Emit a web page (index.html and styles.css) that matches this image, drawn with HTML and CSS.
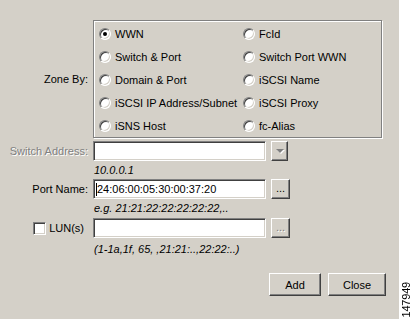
FILE: index.html
```html
<!DOCTYPE html>
<html lang="en">
<head>
    <meta charset="UTF-8">
    <title>Add Member to Zone</title>
    <link rel="stylesheet" href="styles.css">
</head>
<body>
    <div class="screen">
        <div class="dialog">
            <div class="form">
                <div class="label">Zone By:</div>
                <div class="group">
                    <div class="radio"><span class="dot checked"></span>WWN</div>
                    <div class="radio"><span class="dot"></span>FcId</div>
                    <div class="radio"><span class="dot"></span>Switch &amp; Port</div>
                    <div class="radio"><span class="dot"></span>Switch Port WWN</div>
                    <div class="radio"><span class="dot"></span>Domain &amp; Port</div>
                    <div class="radio"><span class="dot"></span>iSCSI Name</div>
                    <div class="radio"><span class="dot"></span>iSCSI IP Address/Subnet</div>
                    <div class="radio"><span class="dot"></span>iSCSI Proxy</div>
                    <div class="radio"><span class="dot"></span>iSNS Host</div>
                    <div class="radio"><span class="dot"></span>fc-Alias</div>
                </div>

                <div class="label disabled first">Switch Address:</div>
                <div class="control first">
                    <div class="field"></div>
                    <div class="btn combo"><span class="arrow"></span></div>
                </div>
                <div></div>
                <div class="hint h18">10.0.0.1</div>

                <div class="label">Port Name:</div>
                <div class="control">
                    <div class="field"><span class="caret"></span>24:06:00:05:30:00:37:20</div>
                    <div class="btn more">...</div>
                </div>
                <div></div>
                <div class="hint h19">e.g. 21:21:22:22:22:22:22,..</div>

                <div class="label lun"><span class="check"></span>LUN(s)</div>
                <div class="control">
                    <div class="field"></div>
                    <div class="btn more off">...</div>
                </div>
                <div></div>
                <div class="hint h22">(1-1a,1f, 65, ,21:21:..,22:22:..)</div>
            </div>

            <div class="actions">
                <div class="button add">Add</div>
                <div class="button close">Close</div>
            </div>
        </div>
        <div class="strip"><span class="figure">147949</span></div>
    </div>
</body>
</html>
```

FILE: styles.css
```css
body {
    margin: 0;
    padding: 0;
    font-family: "Liberation Sans", Arial, sans-serif;
    font-size: 11px;
    color: #000;
}

.screen {
    display: flex;
    width: 413px;
    height: 319px;
    overflow: hidden;
}

.dialog {
    width: 399px;
    background-color: #d4d0c8;
}

.form {
    display: grid;
    grid-template-columns: 88px auto;
    column-gap: 5px;
    padding-top: 20px;
}

.label {
    display: flex;
    align-items: center;
    justify-content: flex-end;
    height: 20px;
    white-space: nowrap;
}

.label:first-child {
    height: auto;
}

.label.disabled {
    color: #808080;
    text-shadow: 1px 1px 0 #fff;
}

.label.lun {
    padding-right: 4px;
}

.first {
    margin-top: 3px;
}

/* etched group box */
.group {
    box-sizing: border-box;
    width: 289px;
    height: 118px;
    padding: 1px 0 0 5px;
    border: 1px solid #808080;
    box-shadow: inset 1px 1px 0 #fff, 1px 1px 0 #fff;
    display: grid;
    grid-template-columns: 144px auto;
    grid-auto-rows: 23px;
}

.radio {
    display: flex;
    align-items: center;
    white-space: nowrap;
}

.dot {
    box-sizing: border-box;
    width: 12px;
    height: 12px;
    margin-right: 4px;
    border-radius: 50%;
    background-color: #fff;
    border: 1px solid;
    border-color: #808080 #fff #fff #808080;
    box-shadow: inset 1px 1px 0 #404040, inset -1px -1px 0 #d4d0c8;
    display: flex;
    align-items: center;
    justify-content: center;
}

.dot.checked::after {
    content: "";
    width: 4px;
    height: 4px;
    border-radius: 50%;
    background-color: #000;
}

.control {
    display: flex;
    gap: 5px;
    height: 20px;
}

.field {
    box-sizing: border-box;
    width: 173px;
    height: 20px;
    padding-left: 2px;
    background-color: #fff;
    border: 1px solid;
    border-color: #808080 #fff #fff #808080;
    box-shadow: inset 1px 1px 0 #404040, inset -1px -1px 0 #d4d0c8;
    display: flex;
    align-items: center;
    white-space: nowrap;
}

.caret {
    width: 1px;
    height: 13px;
    background-color: #000;
}

.btn,
.button {
    box-sizing: border-box;
    background-color: #d4d0c8;
    border: 1px solid;
    border-color: #fff #404040 #404040 #fff;
    box-shadow: inset -1px -1px 0 #808080;
    display: flex;
    align-items: center;
    justify-content: center;
}

.combo {
    width: 17px;
    height: 20px;
}

.arrow {
    width: 0;
    height: 0;
    border-left: 4px solid transparent;
    border-right: 4px solid transparent;
    border-top: 4px solid #808080;
    filter: drop-shadow(1px 1px 0 #fff);
}

.more {
    width: 19px;
    height: 20px;
    padding-bottom: 2px;
}

.more.off {
    color: #808080;
    text-shadow: 1px 1px 0 #fff;
}

.check {
    box-sizing: border-box;
    width: 13px;
    height: 13px;
    margin-right: 3px;
    background-color: #fff;
    border: 1px solid;
    border-color: #808080 #fff #fff #808080;
    box-shadow: inset 1px 1px 0 #404040, inset -1px -1px 0 #d4d0c8;
}

.hint {
    font-style: italic;
    padding-left: 1px;
    white-space: nowrap;
}

.h18 { height: 18px; line-height: 18px; }
.h19 { height: 19px; line-height: 19px; }
.h22 { height: 22px; line-height: 22px; }

.actions {
    display: flex;
    justify-content: flex-end;
    gap: 7px;
    margin-top: 13px;
    padding-right: 13px;
}

.button {
    height: 23px;
}

.add {
    width: 52px;
}

.close {
    width: 58px;
}

.strip {
    width: 14px;
    background-color: #fff;
    display: flex;
    flex-direction: column;
    justify-content: flex-end;
    align-items: center;
    padding-bottom: 1px;
}

.figure {
    writing-mode: vertical-rl;
    transform: rotate(180deg);
    font-size: 11px;
    line-height: 12px;
    letter-spacing: -0.2px;
}
```
